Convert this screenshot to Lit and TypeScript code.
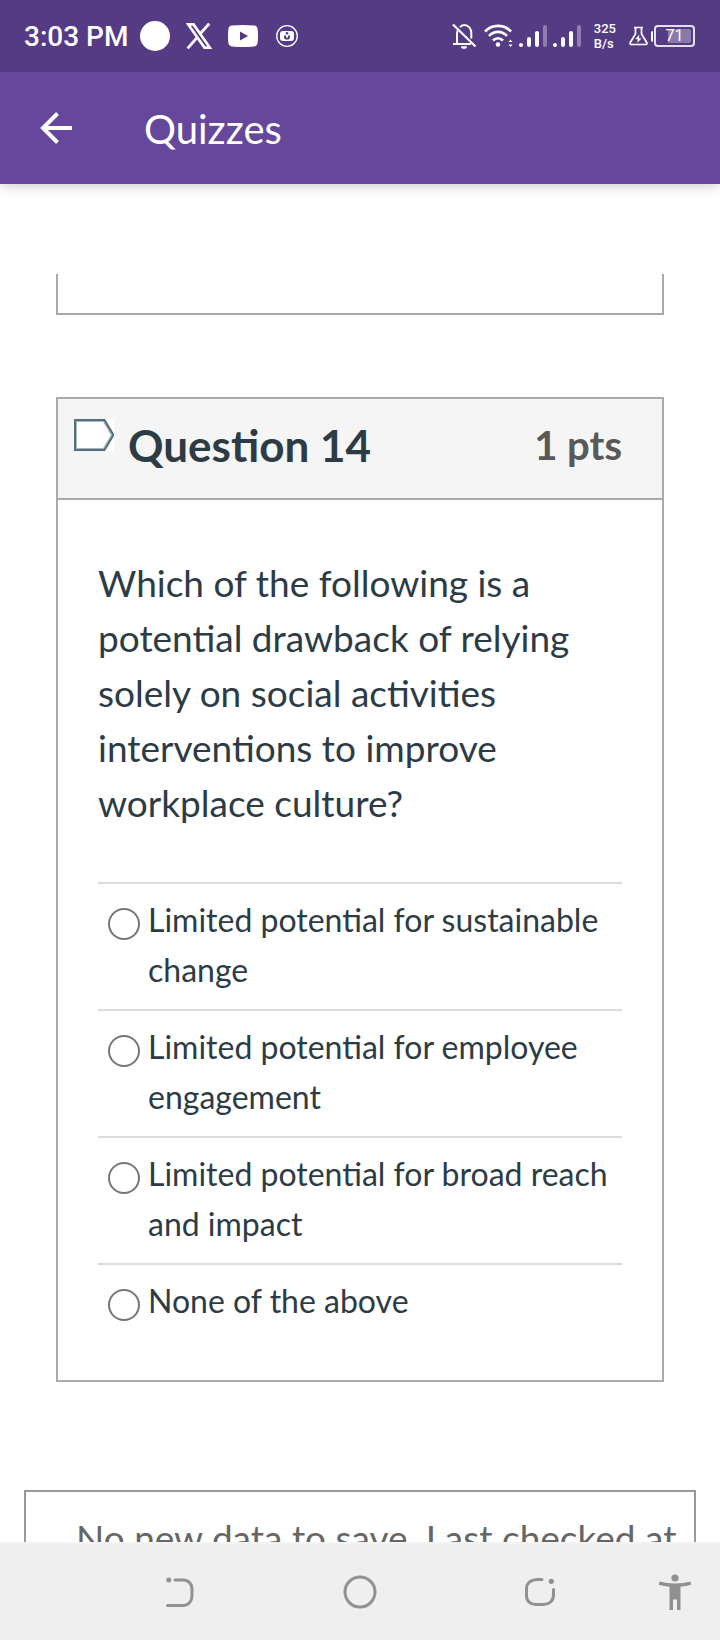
import { LitElement, html, css, svg } from "lit";
import { customElement, state } from "lit/decorators.js";

const ANSWERS = [
  "Limited potential for sustainable change",
  "Limited potential for employee engagement",
  "Limited potential for broad reach and impact",
  "None of the above",
];

const signal = () => html`<svg class="icon" width="28" height="24" viewBox="0 0 28 24" aria-hidden="true">
  ${[
    [0, 19, 4, 1],
    [8, 13, 4, 1],
    [16, 7, 4, 1],
    [24, 1, 4, 0.35],
  ].map(
    ([x, y, w, o]) =>
      svg`<rect x=${x} y=${y} width=${w} height=${23 - y} rx="2" fill="#fff" fill-opacity=${o}></rect>`
  )}
</svg>`;

@customElement("status-bar")
export class StatusBar extends LitElement {
  static styles = css`
    :host {
      display: flex;
      justify-content: space-between;
      align-items: center;
      height: 72px;
      padding: 0 25px 0 24px;
      background: #553a84;
      color: #fff;
      font-family: Roboto, sans-serif;
    }
    .group {
      display: flex;
      align-items: center;
    }
    .apps {
      gap: 16px;
    }
    .icon {
      display: block;
      flex: none;
    }
    .time {
      padding-top: 2px;
      font-size: 28px;
      line-height: 32px;
      font-weight: 500;
      white-space: nowrap;
    }
    .clock {
      display: flex;
      align-items: center;
      gap: 12px;
    }
    .system {
      gap: 6px;
    }
    .rate {
      padding: 0 7px;
      font-size: 13px;
      line-height: 15px;
      font-weight: 500;
    }
    .power {
      display: flex;
      align-items: center;
    }
    .nub {
      width: 2px;
      height: 11px;
      margin: 0 1px 0 3px;
      border-radius: 2px 0 0 2px;
      background: #fff;
    }
    .cell {
      box-sizing: border-box;
      width: 41px;
      height: 22px;
      border: 2px solid #e4dfec;
      border-radius: 4px;
      padding: 2px;
    }
    .level {
      height: 14px;
      border-radius: 2px;
      background: linear-gradient(to left, rgba(255, 255, 255, 0.32) 71%, transparent 71%);
      font-size: 16px;
      line-height: 14px;
      text-align: center;
    }
  `;

  render() {
    return html`
      <div class="group apps">
        <div class="clock">
          <span class="time">3:03 PM</span>
          <svg class="icon" width="30" height="30" viewBox="0 0 30 30" aria-hidden="true">
            <circle cx="15" cy="15" r="15" fill="#fff" />
          </svg>
        </div>
        <svg class="icon" width="26" height="26" viewBox="0 0 26 26" aria-hidden="true">
          <path d="M2.200 1.400h5.300l16.300 23.200h-5.300z" fill="none" stroke="#fff" stroke-width="2.600" />
          <path d="M23.200.6 14 11M11 14.600 1.600 25.400" fill="none" stroke="#fff" stroke-width="2.800" />
        </svg>
        <svg class="icon" width="30" height="22" viewBox="0 0 30 22" aria-hidden="true">
          <path
            fill="#fff"
            fill-rule="evenodd"
            d="M4 .6Q15-.4 26 .6 29.300 1 29.600 4 30.400 11 29.600 18 29.300 21 26 21.400 15 22.400 4 21.400.7 21 .4 18-.4 11 .4 4 .7 1 4 .6zM12 6.500v9l8-4.500z"
          />
        </svg>
        <svg class="icon" width="26" height="24" viewBox="-2 -1 26 24" aria-hidden="true">
          <circle cx="11" cy="11" r="10.300" fill="none" stroke="#fff" stroke-width="1.300" />
          <rect x="4" y="6" width="14" height="10" rx="3" fill="#fff" />
          <circle cx="11" cy="8.300" r="1.300" fill="#553a84" />
          <path d="M8 10.500h2v2h2v-2h2v2.500l-1.500 1.500h-3L8 13z" fill="#553a84" />
        </svg>
      </div>
      <div class="group system">
        <svg class="icon" width="26" height="26" viewBox="0 0 26 26" aria-hidden="true">
          <g fill="none" stroke="#fff" stroke-width="2">
            <path d="M8 4.200C9 3 10.500 2 12 2c4.600 0 7.300 3.600 7.300 8v5.500" />
            <path d="M5.600 7.500C5 9 5 10 5 11.500V20M1 21h18" />
            <path d="M1 1.500 23.500 23.500" stroke-width="2.200" />
          </g>
          <path d="M9 23.200h6a3 2.600 0 0 1-6 0z" fill="#fff" />
        </svg>
        <svg class="icon" width="29" height="24" viewBox="0 0 29 24" aria-hidden="true">
          <g fill="none" stroke="#fff" stroke-width="2.600">
            <path d="M1 7.500C8 0 20 0 27 7.500" />
            <path d="M5 12c5-5.500 13-5.500 18 0" />
            <path d="M9 16.500c3-3 7-3 10 0" />
          </g>
          <circle cx="14" cy="20.500" r="2.300" fill="#fff" />
          <path d="m24.500 18 2-2.500 2 2.500zM24.500 20.500l2 2.500 2-2.500z" fill="#fff" />
        </svg>
        ${signal()} ${signal()}
        <div class="rate">325<br />B/s</div>
        <div class="power">
          <svg class="icon" width="19" height="20" viewBox="0 0 19 20" aria-hidden="true">
            <path
              d="M5 1.500h9M6.500 2v6L1.300 16.500q-.8 2 1.200 2h14q2 0 1.200-2L12.500 8V2"
              fill="none"
              stroke="#fff"
              stroke-width="1.700"
            />
            <path d="m10.300 8.500-4 4.700h2.500L8.300 17l4.200-4.800H10z" fill="#fff" />
          </svg>
          <span class="nub"></span>
          <div class="cell"><div class="level">71</div></div>
        </div>
      </div>
    `;
  }
}

@customElement("system-nav")
export class SystemNav extends LitElement {
  static styles = css`
    :host {
      display: block;
      border-top: 2px solid #f3f3f3;
      background: #efefef;
    }
    .nav {
      display: grid;
      grid-template-columns: 1fr 2fr 2fr 2fr 1fr;
      height: 96px;
    }
    .button {
      display: flex;
      align-items: center;
      justify-content: center;
      border: 0;
      padding: 0;
      background: none;
      color: #919191;
    }
    .back {
      grid-column: 2;
    }
  `;

  render() {
    return html`<nav class="nav" aria-label="System navigation">
      <button class="button back" aria-label="Back">
        <svg width="36" height="36" viewBox="0 0 36 36">
          <path
            d="M13 6h8c5.500 0 9 4 9 9v7c0 5-3.500 9.500-9 9.500H5.500"
            fill="none"
            stroke="currentColor"
            stroke-width="3"
            stroke-linecap="round"
          />
          <circle cx="6.800" cy="6" r="2.500" fill="currentColor" />
        </svg>
      </button>
      <button class="button" aria-label="Home">
        <svg width="36" height="36" viewBox="0 0 36 36">
          <circle cx="18" cy="18" r="15" fill="none" stroke="currentColor" stroke-width="3" />
        </svg>
      </button>
      <button class="button" aria-label="Recent apps">
        <svg width="36" height="36" viewBox="0 0 36 36">
          <path
            d="M20 5.500h-4C9 5.500 4.500 9 4.500 15v7c0 5 4 8.500 9 8.500h8c5.500 0 10-3.500 10-9.500v-5.500"
            fill="none"
            stroke="currentColor"
            stroke-width="3"
            stroke-linecap="round"
          />
          <circle cx="29.300" cy="7.300" r="2.600" fill="currentColor" />
        </svg>
      </button>
      <button class="button" aria-label="Accessibility">
        <svg width="36" height="36" viewBox="0 0 36 36" fill="currentColor">
          <circle cx="18" cy="4" r="3.600" />
          <path d="M2.500 7.500C12 10 24 10 33.500 7.500l.7 3.200Q29 12.200 23.500 12.700V36H20V25.500h-4V36h-3.500V12.700Q7 12.200 1.800 10.700z" />
        </svg>
      </button>
    </nav>`;
  }
}

@customElement("quiz-question")
export class QuizQuestion extends LitElement {
  @state() private selected = -1;

  static styles = css`
    :host {
      display: block;
      border: 2px solid #aaa;
      color: #2d3b45;
    }
    .header {
      display: flex;
      align-items: flex-start;
      padding: 20px 40px 27px 16px;
      border-bottom: 2px solid #aaa;
      background: #f5f5f5;
    }
    .flag {
      border: 0;
      padding: 0;
      background: none;
    }
    .flag svg {
      display: block;
    }
    .name {
      flex: 1;
      margin: 0;
      padding-left: 14px;
      font-size: 44px;
      line-height: 52px;
      font-weight: 700;
    }
    .points {
      font-size: 40px;
      line-height: 52px;
      font-weight: 700;
      color: #595959;
    }
    .body {
      padding: 55px 40px 40px;
    }
    .text {
      margin: 0 0 52px;
      font-size: 37px;
      line-height: 55px;
    }
    .answer {
      display: flex;
      align-items: flex-start;
      gap: 8px;
      border-top: 2px solid #ddd;
      padding: 11px 0 14px 10px;
      font-size: 32px;
      line-height: 50px;
    }
    .radio {
      appearance: none;
      box-sizing: border-box;
      flex: none;
      width: 32px;
      height: 32px;
      margin: 13px 0 0;
      border: 2px solid #767676;
      border-radius: 50%;
      background: #fff;
    }
    .radio:checked {
      background: radial-gradient(#2d3b45 45%, #fff 50%);
    }
  `;

  render() {
    return html`
      <div class="header">
        <button class="flag" aria-label="Flag question">
          <svg width="40" height="32" viewBox="0 0 40 32">
            <path d="M0 0h40v32H0z" fill="#fff" />
            <path d="M1.500 1.500H30l8.500 14.500-8.500 14.500H1.500z" fill="#fff" stroke="#a9b6be" stroke-width="3" />
            <path d="M1 1h29.500l9 15-9 15H1z" fill="none" stroke="#566f7e" stroke-width="2" />
          </svg>
        </button>
        <h2 class="name">Question 14</h2>
        <span class="points">1 pts</span>
      </div>
      <div class="body" role="radiogroup" aria-labelledby="question">
        <p class="text" id="question">
          Which of the following is a potential drawback of relying solely on social activities
          interventions to improve workplace culture?
        </p>
        ${ANSWERS.map(
          (answer, i) => html`<label class="answer">
            <input
              class="radio"
              type="radio"
              name="answer"
              .checked=${this.selected === i}
              @change=${() => (this.selected = i)}
            />
            <span>${answer}</span>
          </label>`
        )}
      </div>
    `;
  }
}

@customElement("app-root")
export class AppRoot extends LitElement {
  static styles = css`
    :host {
      display: flex;
      flex-direction: column;
      height: 100vh;
      background: #fff;
      font-family: Lato, sans-serif;
    }
    .status {
      z-index: 2;
    }
    .bar {
      z-index: 1;
      display: flex;
      align-items: center;
      gap: 64px;
      height: 112px;
      padding: 0 32px;
      background: #65479c;
      color: #fff;
      box-shadow: 0 2px 12px rgba(0, 0, 0, 0.2);
    }
    .back {
      border: 0;
      padding: 0;
      background: none;
      color: inherit;
    }
    .back svg {
      display: block;
    }
    .title {
      margin: 0;
      padding-top: 2px;
      font-size: 40px;
      line-height: 48px;
      font-weight: 400;
    }
    .page {
      flex: 1;
      min-height: 0;
      overflow: hidden;
      padding: 90px 24px 0;
    }
    .previous {
      height: 39px;
      margin: 0 32px 82px;
      border: 2px solid #aaa;
      border-top: 0;
    }
    .question {
      margin: 0 32px 108px;
    }
    .save {
      border: 2px solid #999;
      padding: 18px 0 20px 50px;
      font-size: 37px;
      line-height: 55px;
      color: #666;
    }
  `;

  render() {
    return html`
      <status-bar class="status"></status-bar>
      <header class="bar">
        <button class="back" aria-label="Back">
          <svg width="48" height="48" viewBox="0 0 48 48">
            <path d="M40 24H11M25.500 9.500 11 24l14.500 14.500" fill="none" stroke="#fff" stroke-width="4" />
          </svg>
        </button>
        <h1 class="title">Quizzes</h1>
      </header>
      <main class="page">
        <div class="previous"></div>
        <quiz-question class="question"></quiz-question>
        <div class="save" role="status">No new data to save. Last checked at</div>
      </main>
      <system-nav></system-nav>
    `;
  }
}
